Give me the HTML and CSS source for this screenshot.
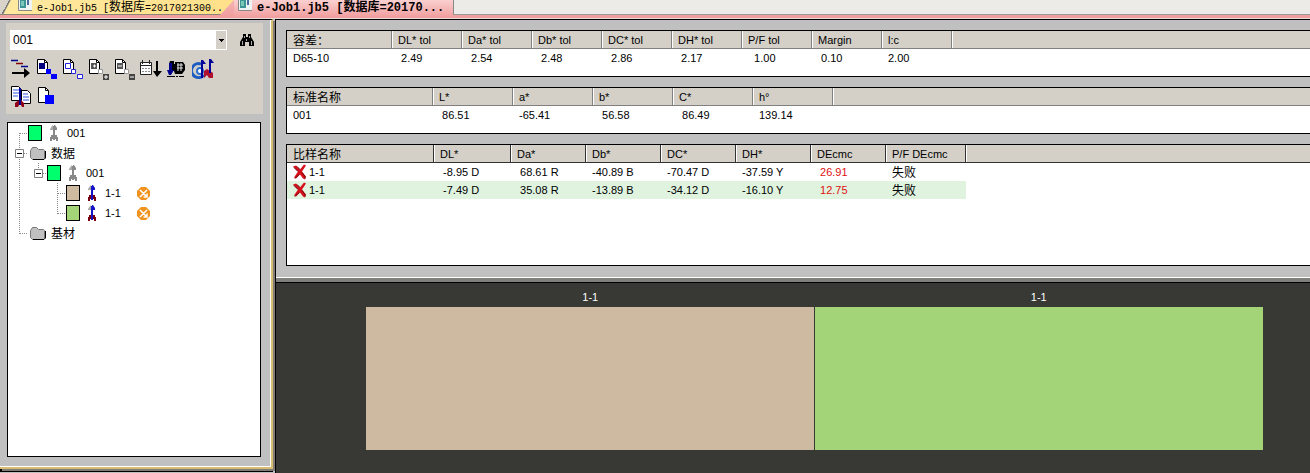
FILE: index.html
```
<!DOCTYPE html>
<html lang="zh-CN">
<head>
    <meta charset="UTF-8">
    <meta name="viewport" content="width=device-width, initial-scale=1.0">
    <title>e-Job1.jb5</title>
    <link rel="stylesheet" href="styles.css">
</head>
<body>
    <!-- Shared icons -->
    <svg class="defs" aria-hidden="true">
        <symbol id="g-line" viewBox="0 0 19 20"><path class="dots" d="M10.5 0V20"/></symbol>
        <symbol id="g-first" viewBox="0 0 19 20"><path class="dots" d="M10.5 10V20M11 10.5H19"/></symbol>
        <symbol id="g-tee" viewBox="0 0 19 20"><path class="dots" d="M10.5 0V20M11 10.5H19"/></symbol>
        <symbol id="g-end" viewBox="0 0 19 20"><path class="dots" d="M10.5 0V11M11 10.5H19"/></symbol>
        <symbol id="g-box" viewBox="0 0 9 9"><path d="M.5.5h8v8h-8z" fill="#fff" stroke="#808080"/><path d="M2 4.500h5" stroke="#000"/></symbol>
        <symbol id="i-arrow" viewBox="0 0 12 16">
            <path d="M5 1h2v14H5z" fill="var(--shaft)"/>
            <path d="M5 0v5H2V4l2-3z" fill="#aaa"/><path d="M6 0h1l2 3v2H6z" fill="var(--shaft)"/>
            <path d="M5 10H3v2H2v4h2v-2h1zM7 10h2v2h1v4H8v-2H7z" fill="var(--tail)"/>
        </symbol>
        <symbol id="i-folder" viewBox="0 0 16 13">
            <path d="M.5 3.500L2.500.5h4l2 2h5l1 1v8l-1 1h-11l-2-2z" fill="#c0c0c0" stroke="#777"/>
            <path d="M3 12.500h11l1.500-1.500V4" fill="none" stroke="#000"/>
        </symbol>
        <symbol id="i-warn" viewBox="0 0 13 13">
            <path d="M4 0h5l4 4v5l-4 4H4L0 9V4z" fill="#f0921e"/>
            <path d="M3 3l7 7M10 3l-7 7M10 6.500V10H6.500" fill="none" stroke="#fff" stroke-width="1.500"/>
        </symbol>
        <symbol id="i-cross" viewBox="0 0 13 15">
            <path d="M0 2l3-1 4 4 4-5 2 1-4 6 4 5-1 3-2-1-3-4-4 4-2-1 4-6z" fill="#d8101c"/>
            <path d="M1 3l4 4M4 2l3 3M9 8l3 4v2M2 14l4-4" fill="none" stroke="#6a0c10"/>
        </symbol>
        <symbol id="i-doc" viewBox="0 0 14 14">
            <path d="M0 0h14v14H0z" fill="#eef4f4"/><path d="M.5 0v13.500H14" fill="none" stroke="#888"/>
            <path d="M2 3h6v8H2z" fill="#3c9494"/><path d="M9 3h2v5H9z" fill="#4a6c9c"/>
            <path d="M3 4h3v5H3z" fill="#7cc8b8"/>
        </symbol>
        <symbol id="i-page" viewBox="0 0 22 22">
            <path d="M1.500 1.500h7l3 3v11h-10z" fill="#fff" stroke="#000"/><path d="M8.500 1.500v3h3" fill="none" stroke="#000"/>
        </symbol>
    </svg>

    <nav class="tabs">
        <a class="tab tab-first" href="#job1"><svg width="14" height="14"><use href="#i-doc"/></svg><span>e-Job1.jb5 [<b class="cjk">数据库</b>=2017021300..</span></a>
        <a class="tab tab-active" href="#job2"><svg width="14" height="14"><use href="#i-doc"/></svg><span>e-Job1.jb5 [<b class="cjk">数据库</b>=20170...</span></a>
        <span class="tab-rest"></span>
    </nav>

    <div class="workspace">
        <aside class="side">
            <div class="toolbar">
                <div class="search">
                    <label class="combo">
                        <select aria-label="标准"><option>001</option></select>
                        <svg class="combo-arrow" viewBox="0 0 10 18"><path d="M0 0h10v18H0z" fill="#d4d0c8"/><path d="M3 8h5v1H7v1H6v1H5v-1H4V9H3z"/></svg>
                    </label>
                    <button class="find" type="button" aria-label="查找">
                        <svg width="16" height="14" viewBox="0 0 16 14"><path d="M4 1h3v3h2V1h3v3l3 5v4h-5V9H6v4H1V9l3-5z"/><path d="M3.500 8v4M12.500 8v4M5.500 3v2M10.500 3v2M7.500 6v2" stroke="#aaa"/></svg>
                    </button>
                </div>
                <div class="icons">
                    <button type="button" aria-label="排列"><svg viewBox="0 0 22 22"><path d="M1 2.500h7M11 8.500h7" stroke="#00008b" stroke-width="1.500"/><path d="M6 5.500h7" stroke="#800000" stroke-width="1.500"/><path d="M2 14h12v-4l6 5-6 5v-4H2z"/></svg></button>
                    <button type="button" aria-label="全部"><svg viewBox="0 0 22 22"><use href="#i-page"/><path d="M3 5h6v6H3z" fill="#000080"/><path d="M10 11h5v5h-5zM15 16h6v5h-6z" fill="#00f"/></svg></button>
                    <button type="button" aria-label="选择"><svg viewBox="0 0 22 22"><use href="#i-page"/><path d="M3.500 5.500h5v5h-5zM9.500 11.500h4v4h-4zM15.500 16.500h5v4h-5z" fill="#fff" stroke="#2222dd"/></svg></button>
                    <button type="button" aria-label="展开"><svg viewBox="0 0 22 22"><use href="#i-page"/><path d="M3 5h6v6H3z" fill="#555"/><path d="M5 8h3M6.500 6.500v3" stroke="#fff"/><path d="M10.500 11.500h4v4h-4z" fill="#fff" stroke="#999"/><path d="M15 16h6v6h-6z" fill="#444"/><path d="M16 19h4M18 17v4" stroke="#fff"/></svg></button>
                    <button type="button" aria-label="折叠"><svg viewBox="0 0 22 22"><use href="#i-page"/><path d="M3 5h6v6H3z" fill="#555"/><path d="M4 8h4" stroke="#fff"/><path d="M10.500 11.500h4v4h-4z" fill="#fff" stroke="#999"/><path d="M15 16h6v6h-6z" fill="#444"/><path d="M16 19h4" stroke="#fff"/></svg></button>
                    <button type="button" aria-label="按日期"><svg viewBox="0 0 22 22"><path d="M.5 4.500h11v12H.5z" fill="#fff" stroke="#222"/><path d="M1 7.500h10M2.500 2v4M9.500 2v4" stroke="#222"/><path d="M2 10.500h8M2 13.500h8" stroke="#888" stroke-dasharray="2 1"/><path d="M16 3h2v10h4l-5 6-4-6h3z"/></svg></button>
                    <button type="button" aria-label="仪器"><svg viewBox="0 0 22 22"><path d="M4 3h4v3h1V4h8l2 3v5l-3 4H9l-1-3H6V6H3z"/><path d="M11 7h6M11 10h6M12 5v8M15 5v8" stroke="#e8e8e8"/><path d="M3 5h3v8H3zM1 12h7l-3 5H3z" fill="#00008b"/><path d="M1 18.500h17" stroke="#000" stroke-dasharray="8 1 2 1"/></svg></button>
                    <button type="button" aria-label="测量"><svg viewBox="0 0 22 22"><path d="M9 6a7 7 0 1 0 3 11" fill="none" stroke="#1c5cc0" stroke-width="3"/><circle cx="8" cy="13" r="3" fill="#fff" stroke="#2a70d0" stroke-width="2"/><path d="M12 13l3-2 6 4v5h-4l-2-3-3 3z" fill="#b01030"/><path d="M10 2v18M18 1v14" stroke="#00009a" stroke-width="2"/><path d="M11 2l3 4h-3zM19 1l3 4h-3z" fill="#00009a"/></svg></button>
                </div>
                <div class="icons">
                    <button type="button" aria-label="复制"><svg viewBox="0 0 22 22"><path d="M1.500 1.500h7l3 3v11h-10zM10.500 5.500h7l3 3v10h-10z" fill="#fff" stroke="#000"/><path d="M3 5h6M3 8h6M3 11h5M13 9h5M13 12h6M13 15h6" stroke="#3355dd"/><path d="M9 3h2v17H9z" fill="#00009a"/><path d="M9 15l-4 3v4h3l1-2zM11 15l3 3v4h-2l-1-2z" fill="#900018"/></svg></button>
                    <button type="button" aria-label="新建"><svg viewBox="0 0 22 22"><path d="M2.500 2.500h7l3 3v12h-10z" fill="#fff" stroke="#000"/><path d="M9.500 2.500v3h3" fill="none" stroke="#000"/><path d="M9 10h9v9H9z" fill="#00f"/></svg></button>
                </div>
            </div>

            <ul class="tree">
                <li><svg class="guide"><use href="#g-first"/></svg><i class="chip green"></i><svg class="arrow gray"><use href="#i-arrow"/></svg><span>001</span></li>
                <li><svg class="guide"><use href="#g-tee"/><use href="#g-box" x="6" y="6" width="9" height="9"/></svg><svg class="folder"><use href="#i-folder"/></svg><span class="cjk">数据</span></li>
                <li><svg class="guide"><use href="#g-line"/></svg><svg class="guide"><use href="#g-end"/><use href="#g-box" x="6" y="6" width="9" height="9"/></svg><i class="chip green"></i><svg class="arrow gray"><use href="#i-arrow"/></svg><span>001</span></li>
                <li><svg class="guide"><use href="#g-line"/></svg><svg class="guide"></svg><svg class="guide"><use href="#g-tee"/></svg><i class="chip tan"></i><svg class="arrow"><use href="#i-arrow"/></svg><span>1-1</span><svg class="warn"><use href="#i-warn"/></svg></li>
                <li><svg class="guide"><use href="#g-line"/></svg><svg class="guide"></svg><svg class="guide"><use href="#g-end"/></svg><i class="chip lime"></i><svg class="arrow"><use href="#i-arrow"/></svg><span>1-1</span><svg class="warn"><use href="#i-warn"/></svg></li>
                <li><svg class="guide"><use href="#g-end"/></svg><svg class="folder"><use href="#i-folder"/></svg><span class="cjk">基材</span></li>
            </ul>
        </aside>

        <main class="main">
            <section class="data">
                <div class="grid-box">
                    <table>
                        <colgroup><col class="w105"><col class="w70" span="8"><col></colgroup>
                        <thead><tr><th class="cjk">容差：</th><th>DL* tol</th><th>Da* tol</th><th>Db* tol</th><th>DC* tol</th><th>DH* tol</th><th>P/F tol</th><th>Margin</th><th>l:c</th><th></th></tr></thead>
                        <tbody><tr><td>D65-10</td><td>&nbsp;2.49</td><td>&nbsp;2.54</td><td>&nbsp;2.48</td><td>&nbsp;2.86</td><td>&nbsp;2.17</td><td>&nbsp;&nbsp;1.00</td><td>&nbsp;0.10</td><td>2.00</td><td></td></tr></tbody>
                    </table>
                </div>
                <div class="grid-box">
                    <table>
                        <colgroup><col class="w146"><col class="w80" span="5"><col></colgroup>
                        <thead><tr><th class="cjk">标准名称</th><th>L*</th><th>a*</th><th>b*</th><th>C*</th><th>h°</th><th></th></tr></thead>
                        <tbody><tr><td>001</td><td>&nbsp;86.51</td><td>-65.41</td><td>&nbsp;56.58</td><td>&nbsp;86.49</td><td>139.14</td><td></td></tr></tbody>
                    </table>
                </div>
                <div class="grid-box samples">
                    <table>
                        <colgroup><col class="w147"><col class="w77"><col class="w75" span="5"><col class="w80"><col></colgroup>
                        <thead><tr><th class="cjk">比样名称</th><th>DL*</th><th>Da*</th><th>Db*</th><th>DC*</th><th>DH*</th><th>DEcmc</th><th>P/F DEcmc</th><th></th></tr></thead>
                        <tbody>
                            <tr><td class="name"><svg class="cross"><use href="#i-cross"/></svg>1-1</td><td>&nbsp;-8.95 D</td><td>&nbsp;68.61 R</td><td>-40.89 B</td><td>-70.47 D</td><td>-37.59 Y</td><td class="fail">&nbsp;26.91</td><td class="cjk">失败</td><td></td></tr>
                            <tr class="alt"><td class="name"><svg class="cross"><use href="#i-cross"/></svg>1-1</td><td>&nbsp;-7.49 D</td><td>&nbsp;35.08 R</td><td>-13.89 B</td><td>-34.12 D</td><td>-16.10 Y</td><td class="fail">&nbsp;12.75</td><td class="cjk">失败</td><td></td></tr>
                        </tbody>
                    </table>
                </div>
            </section>

            <section class="preview">
                <figure><figcaption>1-1</figcaption><div class="swatch tan"></div></figure>
                <figure><figcaption>1-1</figcaption><div class="swatch lime"></div></figure>
            </section>
        </main>
    </div>
</body>
</html>
```
FILE: styles.css
```
* {
    box-sizing: border-box;
}

body {
    margin: 0;
    min-height: 100vh;
    display: flex;
    flex-direction: column;
    background: #c0c0c0;
    color: #000;
    font-family: "Liberation Sans", "Noto Sans CJK SC", sans-serif;
    font-size: 11px;
    line-height: 14px;
}

svg {
    display: block;
    flex: none;
}

.defs {
    position: absolute;
    width: 0;
    height: 0;
}

.cjk {
    font-family: "Noto Sans CJK SC", sans-serif;
    font-size: 12px;
    font-weight: inherit;
}

/* Tabs */
.tabs {
    display: flex;
    height: 19px;
    background: linear-gradient(#f4b4b4, #f09c9c);
    border-bottom: 1px solid #e8dcd8;
}

.tab {
    display: flex;
    gap: 5px;
    height: 18px;
    color: #000;
    text-decoration: none;
    white-space: nowrap;
    font-family: "Liberation Mono", "Noto Sans CJK SC", monospace;
    line-height: 13px;
}

.tab .cjk {
    line-height: 12px;
}

.tab svg {
    margin-top: -3px;
}

.tab-first {
    width: 234px;
    height: 15px;
    padding-left: 18px;
    font-size: 10px;
    border-bottom: 1px solid #8c8478;
    background: linear-gradient(118deg, #d8d4cc 8px, #777 8px, #777 9px, #ffe9a0 10px, #ffe08a 210px, #ffdf8c);
    clip-path: polygon(0 0, 100% 0, 220px 100%, 0 100%);
}

.tab-active {
    width: 219px;
    padding-left: 4px;
    font-size: 12px;
    font-weight: bold;
    background: linear-gradient(#fbd0d0, #f09c9c);
}

.tab-rest {
    flex: 1;
    height: 15px;
    background: #ecebe8;
    border-left: 1px solid #888;
    border-bottom: 1px solid #999;
}

.workspace {
    flex: 1;
    display: flex;
}

/* Left panel */
.side {
    width: 273px;
    display: flex;
    flex-direction: column;
    gap: 8px;
    margin: 0 2px 4px 0;
    padding: 3px 8px 10px 6px;
    border-top: 1px solid #000;
    border-right: 2px solid #d8bc70;
    border-bottom: 2px solid #d8bc70;
    box-shadow: inset -1px -1px #fff, 2px 2px #807c78, 0 3px #000;
}

.toolbar {
    display: flex;
    flex-direction: column;
    gap: 5px;
    height: 91px;
    padding: 7px 4px 0;
    background: #d4d0c8;
}

.search {
    display: flex;
    align-items: center;
    gap: 12px;
    margin-bottom: 3px;
}

.combo {
    position: relative;
    flex: 1;
    max-width: 217px;
    height: 20px;
}

.combo select {
    appearance: none;
    width: 100%;
    height: 20px;
    padding: 0 2px;
    border: 1px solid #fff;
    border-radius: 0;
    background: #fff;
    color: #000;
    font: 12px "Liberation Sans", sans-serif;
}

.combo-arrow {
    position: absolute;
    top: 1px;
    right: 1px;
    width: 10px;
    height: 18px;
    pointer-events: none;
}

button {
    padding: 0;
    border: 0;
    background: none;
}

.icons {
    display: flex;
    gap: 4px;
}

.icons svg {
    width: 22px;
    height: 22px;
}

/* Sample tree */
.tree {
    flex: 1;
    width: 254px;
    margin: 0 0 0 1px;
    padding: 0 1px;
    border: 1px solid #000;
    background: #fff;
    list-style: none;
}

.tree li {
    display: flex;
    align-items: center;
    height: 20px;
}

.guide {
    width: 19px;
    height: 20px;
}

.dots {
    fill: none;
    stroke: #888;
    stroke-dasharray: 1 1;
}

.chip {
    width: 14px;
    height: 16px;
    border: 1px solid #000;
}

.arrow {
    width: 12px;
    height: 16px;
    margin: 0 7px 0 6px;
    --shaft: #1414c8;
    --tail: #780010;
}

.arrow.gray {
    --shaft: #888;
    --tail: #888;
}

.folder {
    width: 16px;
    height: 13px;
    margin: 0 5px 0 2px;
}

.warn {
    width: 13px;
    height: 13px;
    margin-left: 16px;
}

.green {
    background: #00ff6c;
}

.tan {
    background: #cdbaa1;
}

.lime {
    background: #a3d477;
}

/* Data grids */
.main {
    flex: 1;
    min-width: 0;
    display: flex;
    flex-direction: column;
    border-top: 1px solid #000;
    border-left: 1px solid #000;
}

.data {
    display: flex;
    flex-direction: column;
    gap: 10px;
    padding: 10px 0 16px 10px;
}

.grid-box {
    height: 47px;
    overflow: hidden;
    background: #fff;
    border: 1px solid #000;
    border-right: 0;
}

.samples {
    height: 122px;
}

table {
    width: 100%;
    table-layout: fixed;
    border-collapse: separate;
    border-spacing: 0;
}

th,
td {
    height: 18px;
    padding: 0 0 0 6px;
    text-align: left;
    font-weight: normal;
    line-height: 16px;
    white-space: nowrap;
}

th {
    background: #d4d0c8;
    border-right: 1px solid #808080;
    border-bottom: 1px solid #808080;
    box-shadow: inset 1px 0 #fff;
}

th:first-child {
    box-shadow: none;
}

th:last-child {
    border-right: 0;
}

.samples th {
    border-color: #333;
}

.alt td:not(:last-child) {
    background: #dff3df;
}

.name {
    display: flex;
    align-items: center;
    gap: 3px;
}

.cross {
    width: 13px;
    height: 16px;
}

.fail {
    color: #e01010;
}

.w70 { width: 70px; }
.w75 { width: 75px; }
.w77 { width: 77px; }
.w80 { width: 80px; }
.w105 { width: 105px; }
.w146 { width: 146px; }
.w147 { width: 147px; }

/* Colour preview */
.preview {
    flex: 1;
    display: flex;
    padding: 7px 47px 23px 90px;
    background: #383835;
    border-top: 1px solid #000;
    box-shadow: 0 -4px #80807c, 0 -5px #fff;
}

figure {
    flex: 1;
    display: flex;
    flex-direction: column;
    gap: 3px;
    margin: 0;
}

figcaption {
    color: #fff;
    text-align: center;
}

.swatch {
    flex: 1;
}

.swatch.tan {
    border-right: 1px solid #383835;
}
```
